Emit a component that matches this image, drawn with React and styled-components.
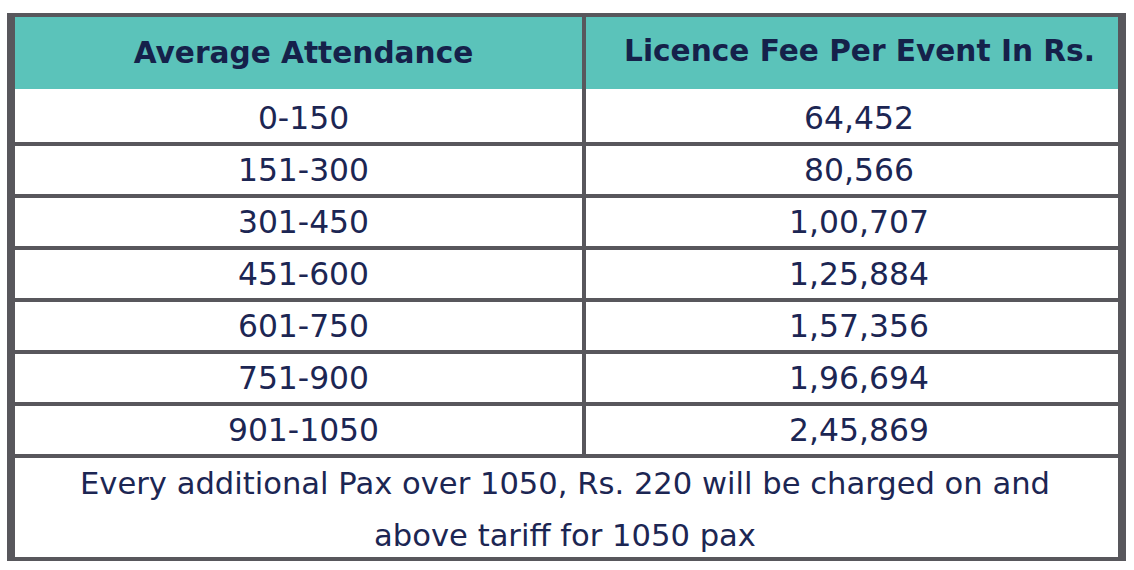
import React from 'react'
import styled, { createGlobalStyle } from 'styled-components'

const GlobalStyle = createGlobalStyle`
  html, body {
    margin: 0;
    padding: 0;
    background: #ffffff;
  }
  body {
    font-family: "DejaVu Sans", Verdana, sans-serif;
  }
`

const Page = styled.div`
  padding: 13px 0 0 7px;
`

const Table = styled.div`
  width: 1119px;
  box-sizing: border-box;
  border-style: solid;
  border-color: #58575c;
  border-width: 4px 8px;
  background: #ffffff;
`

const Row = styled.div`
  display: grid;
  grid-template-columns: 567px 532px;
  column-gap: 4px;
  background: #58575c;
  border-bottom: ${p => (p.sep ? '4px solid #58575c' : 'none')};
`

const Head = styled.div`
  height: 72px;
  box-sizing: border-box;
  background: #5bc3ba;
  color: #15214a;
  font-weight: bold;
  font-size: 29.6px;
  display: flex;
  align-items: center;
  justify-content: center;
  padding-left: ${p => (p.right ? 15 : 10)}px;
  padding-bottom: ${p => (p.right ? 5 : 0)}px;
`

const Cell = styled.div`
  height: ${p => (p.first ? 53 : 48)}px;
  box-sizing: border-box;
  padding-top: ${p => (p.first ? 5 : 0)}px;
  padding-left: ${p => (p.right ? 14 : 10)}px;
  background: #ffffff;
  color: #1c2653;
  font-size: 31.4px;
  display: flex;
  align-items: center;
  justify-content: center;
`

const Footer = styled.div`
  height: 99px;
  color: #1c2653;
  font-size: 30.6px;
  line-height: 52px;
  text-align: center;
  padding-right: 3px;
  white-space: nowrap;
`

const rows = [
  ['0-150', '64,452'],
  ['151-300', '80,566'],
  ['301-450', '1,00,707'],
  ['451-600', '1,25,884'],
  ['601-750', '1,57,356'],
  ['751-900', '1,96,694'],
  ['901-1050', '2,45,869'],
]

export default function App() {
  return (
    <>
      <GlobalStyle />
      <Page>
        <Table>
          <Row>
            <Head>Average Attendance</Head>
            <Head right>Licence Fee Per Event In Rs.</Head>
          </Row>
          {rows.map((r, i) => (
            <Row key={r[0]} sep>
              <Cell first={i === 0}>{r[0]}</Cell>
              <Cell first={i === 0} right>{r[1]}</Cell>
            </Row>
          ))}
          <Footer>
            Every additional Pax over 1050, Rs. 220 will be charged on and
            <br />
            above tariff for 1050 pax
          </Footer>
        </Table>
      </Page>
    </>
  )
}
